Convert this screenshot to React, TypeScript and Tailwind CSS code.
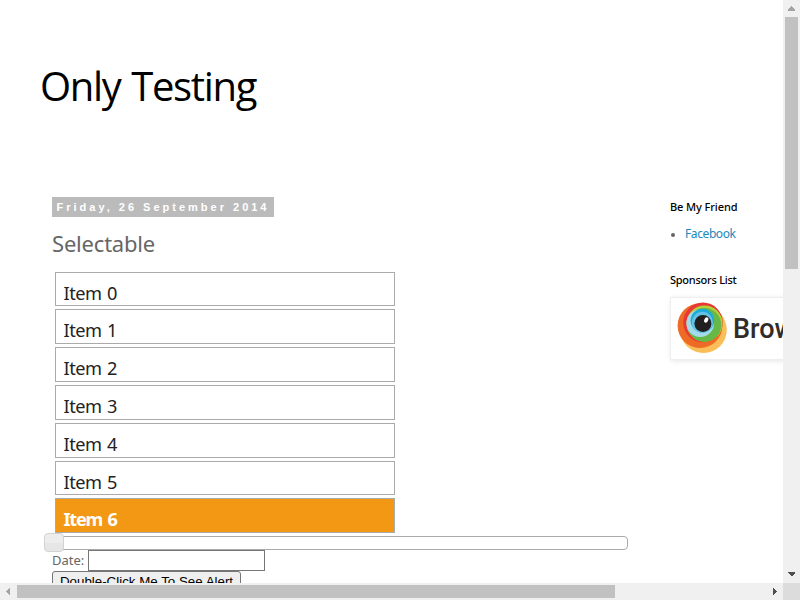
const items = [0, 1, 2, 3, 4, 5, 6];

function BrowserLogo() {
  return (
    <svg width="50" height="52" viewBox="0 0 50 52" className="shrink-0">
      <circle cx="26.5" cy="27.8" r="23.3" fill="#fabd57" />
      <circle cx="23" cy="23.6" r="22.4" fill="#ed6b24" />
      <circle cx="26" cy="20.4" r="19.8" fill="#e93636" />
      <circle cx="27.5" cy="21.5" r="18" fill="#b3d036" />
      <circle cx="27.3" cy="22.9" r="17" fill="#66b946" />
      <circle cx="23.2" cy="21.2" r="13.8" fill="#a5daeb" />
      <circle cx="25.4" cy="18.6" r="11.8" fill="#1eaad8" />
      <circle cx="25.4" cy="20.4" r="10.6" fill="#62c3e3" />
      <circle cx="25.9" cy="21.4" r="8.5" fill="#221f20" />
      <ellipse cx="29.2" cy="18" rx="1.9" ry="2.8" fill="#fff" transform="rotate(25 29.2 18)" />
    </svg>
  );
}

function Page() {
  return (
    <div className="h-[583px] w-[783px] overflow-hidden bg-white">
      <h1 className="ml-10 h-[197px] pt-[58px] font-['Trebuchet_MS','Open_Sans',sans-serif] text-[40px] leading-[56px] tracking-[-1.3px] [word-spacing:1.5px] whitespace-nowrap text-black">
        <span>Only Testing</span>
      </h1>
      <div className="flex w-[1100px]">
        <main className="w-[626px] shrink-0 pl-[52px] text-[#666666]">
          <h2 className="h-5 w-[222px] bg-[#bbbbbb] pl-[4.5px] font-['Liberation_Sans',Arial,sans-serif] text-[11px] leading-5 font-bold tracking-[3px] whitespace-nowrap text-white">
            Friday, 26 September 2014
          </h2>
          <h3 className="h-[54.6px] pt-[12px] text-[22px] leading-[28px] tracking-[-0.2px]">
            <span>Selectable</span>
          </h3>
          <ol className="ml-[3px] w-[340px]">
            {items.map((n) => (
              <li
                key={n}
                className={
                  "mb-[3px] h-[34.8px] border border-[#aaaaaa] pt-[8px] pl-[7.6px] text-[18.2px] leading-[24px] " +
                  (n === 6
                    ? "bg-[#f39814] font-bold tracking-[-1.3px] [word-spacing:2px] text-white"
                    : "bg-white tracking-[-0.5px] [word-spacing:1.2px] text-[#222222]")
                }
              >
                <span>Item {n}</span>
              </li>
            ))}
          </ol>
          <div className="-ml-2 flex h-[17px] w-[584px] items-start">
            <div className="z-10 -mt-[3px] h-[19px] w-5 shrink-0 rounded-[4px] border border-[#d3d3d3] bg-linear-to-b from-[#ededed] from-50% to-[#e6e6e6] to-50%" />
            <div className="-ml-5 h-[14px] w-[584px] shrink-0 rounded-[4px] border border-[#aaaaaa] bg-white" />
          </div>
          <div className="-mt-[3.2px] flex h-[21.4px] items-start">
            <span className="w-9 text-[13px] leading-[21px] whitespace-nowrap">Date:</span>
            <input className="h-[21px] w-[177px] border border-[#767676] bg-white outline-none" />
          </div>
          <button className="block h-[21px] w-[189px] rounded-[3px] border border-[#767676] bg-[#efefef] font-['Liberation_Sans',Arial,sans-serif] text-[13.333px] leading-[19px] whitespace-nowrap text-black">
            Double-Click Me To See Alert
          </button>
        </main>
        <aside className="ml-[44px] text-[11px]">
          <h2 className="h-[27px] pt-[2px] leading-[15px] font-medium tracking-[-0.1px] whitespace-nowrap text-black">
            <span>Be My Friend</span>
          </h2>
          <ul className="h-[46px]">
            <li className="flex h-5 items-center text-[12px] tracking-[-0.4px]">
              <span className="mt-[2px] mr-2 ml-[1px] size-1 rounded-full bg-[#666666]" />
              <a className="ml-[2px] text-[#2288bb]">Facebook</a>
            </li>
          </ul>
          <h2 className="h-[27px] pt-[2px] leading-[15px] font-medium tracking-[-0.25px] whitespace-nowrap text-black">
            <span>Sponsors List</span>
          </h2>
          <div className="flex h-[63px] w-[280px] items-start border border-[#eeeeee] bg-white pt-[4px] pl-[6px] shadow-[1px_1px_5px_rgba(0,0,0,0.1)]">
            <BrowserLogo />
            <span className="ml-[6px] pt-[8px] font-[Roboto,sans-serif] text-[27px] leading-[38px] font-medium text-[#332b27]">BrowserStack</span>
          </div>
        </aside>
      </div>
    </div>
  );
}

export default function App() {
  return (
    <div className="grid h-[600px] w-[800px] grid-cols-[783px_17px] grid-rows-[583px_17px] overflow-hidden bg-white font-['Trebuchet_MS','Noto_Sans',sans-serif]">
      <Page />
      <div className="flex flex-col items-center bg-[#f0f0f0]">
        <svg width="17" height="17" shapeRendering="crispEdges">
          <path d="M5 10V9.5L8.5 6L12 9.5V11H5Z" fill="#a3a3a3" />
        </svg>
        <div className="h-[252px] w-[13px] bg-[#c1c1c1]" />
        <svg width="17" height="17" className="mt-auto" shapeRendering="crispEdges">
          <path d="M5 6H12V7L8.5 10.5L5 7Z" fill="#505050" />
        </svg>
      </div>
      <div className="flex items-center bg-[#f0f0f0]">
        <svg width="17" height="17" shapeRendering="crispEdges">
          <path d="M10 5V12L6 8.5Z" fill="#a3a3a3" />
        </svg>
        <div className="h-[13px] w-[598px] bg-[#c1c1c1]" />
        <svg width="17" height="17" className="ml-auto" shapeRendering="crispEdges">
          <path d="M7 5V12L11 8.5Z" fill="#505050" />
        </svg>
      </div>
      <div className="bg-[#dcdcdc]" />
    </div>
  );
}
